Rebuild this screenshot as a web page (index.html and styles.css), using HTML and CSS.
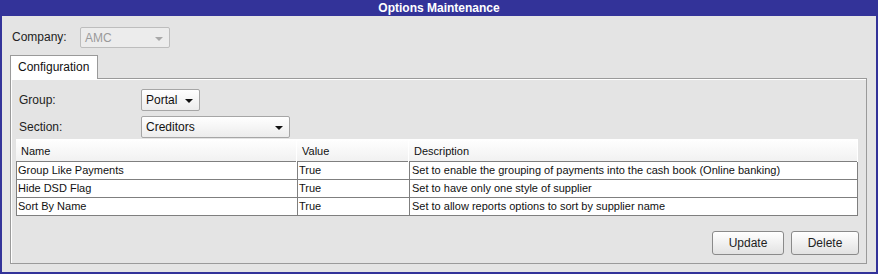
FILE: index.html
```html
<!DOCTYPE html>
<html lang="en">
<head>
    <meta charset="UTF-8">
    <title>Options Maintenance</title>
    <link rel="stylesheet" href="styles.css">
</head>
<body>
    <div class="window">
        <div class="title-bar">Options Maintenance</div>
        <div class="content">
            <div class="company-row">
                <span class="label company-label">Company:</span>
                <div class="combo disabled company-combo">AMC<span class="arrow"></span></div>
            </div>
            <div class="tabs">
                <div class="tab">Configuration</div>
            </div>
            <div class="panel">
                <div class="form-row">
                    <span class="label">Group:</span>
                    <div class="combo group-combo">Portal<span class="arrow"></span></div>
                </div>
                <div class="form-row">
                    <span class="label">Section:</span>
                    <div class="combo section-combo">Creditors<span class="arrow"></span></div>
                </div>
                <div class="grid">
                    <div class="grid-head">
                        <div class="hcell">Name</div>
                        <div class="hcell">Value</div>
                        <div class="hcell">Description</div>
                    </div>
                    <div class="grid-body">
                        <div class="row">
                            <div class="cell">Group Like Payments</div>
                            <div class="cell">True</div>
                            <div class="cell">Set to enable the grouping of payments into the cash book (Online banking)</div>
                        </div>
                        <div class="row">
                            <div class="cell">Hide DSD Flag</div>
                            <div class="cell">True</div>
                            <div class="cell">Set to have only one style of supplier</div>
                        </div>
                        <div class="row">
                            <div class="cell">Sort By Name</div>
                            <div class="cell">True</div>
                            <div class="cell">Set to allow reports options to sort by supplier name</div>
                        </div>
                    </div>
                </div>
                <div class="buttons">
                    <button class="btn update-btn">Update</button>
                    <button class="btn delete-btn">Delete</button>
                </div>
            </div>
        </div>
    </div>
</body>
</html>
```

FILE: styles.css
```css
body {
    margin: 0;
    font-family: "Liberation Sans", Arial, sans-serif;
    background-color: #e4e4e4;
}
.window {
    width: 878px;
    height: 274px;
    box-sizing: border-box;
    background-color: #333399;
    padding: 0 2px 2px 2px;
    display: flex;
    flex-direction: column;
}
.title-bar {
    height: 16px;
    line-height: 16px;
    color: #fff;
    font-weight: bold;
    font-size: 12px;
    text-align: center;
}
.content {
    flex: 1;
    background-color: #e4e4e4;
    padding: 10px 9px 0 8px;
    display: flex;
    flex-direction: column;
}
.company-row {
    display: flex;
    align-items: center;
    height: 22px;
}
.label {
    font-size: 12px;
    color: #222;
}
.company-label {
    margin-left: 2px;
    width: 68px;
}
.combo {
    position: relative;
    box-sizing: border-box;
    height: 22px;
    line-height: 20px;
    font-size: 12px;
    padding-left: 4px;
    color: #111;
    border: 1px solid #a6a6a6;
    border-radius: 2px;
    background: linear-gradient(#ffffff, #ececec);
}
.combo .arrow {
    position: absolute;
    right: 6px;
    top: 9px;
    border-left: 4px solid transparent;
    border-right: 4px solid transparent;
    border-top: 4px solid #111;
}
.combo.disabled {
    color: #9a9a9a;
    background: #ececec;
    border-color: #bdbdbd;
}
.combo.disabled .arrow {
    border-top-color: #a8a8a8;
}
.company-combo {
    width: 90px;
    height: 21px;
    margin-top: 1px;
}
.group-combo {
    width: 59px;
}
.section-combo {
    width: 149px;
}
.tabs {
    display: flex;
    margin-top: 7px;
    position: relative;
    z-index: 1;
}
.tab {
    height: 23px;
    line-height: 22px;
    box-sizing: border-box;
    width: 88px;
    padding-left: 7px;
    font-size: 12px;
    color: #111;
    background-color: #fff;
    border: 1px solid #9a9a9a;
    border-bottom: none;
    margin-bottom: -1px;
    height: 24px;
}
.panel {
    width: 857px;
    height: 186px;
    box-sizing: border-box;
    border: 1px solid #9a9a9a;
    box-shadow: inset 1px 1px 0 #fff;
    padding-top: 10px;
    display: flex;
    flex-direction: column;
}
.form-row {
    display: flex;
    align-items: center;
    height: 22px;
    padding-left: 8px;
    margin-bottom: 5px;
}
.form-row .label {
    width: 122px;
}
.form-row + .form-row {
    margin-bottom: 1px;
}
.grid {
    margin-left: 5px;
    width: 842px;
    font-size: 11px;
    color: #111;
}
.grid-head {
    display: grid;
    grid-template-columns: 281px 112px 449px;
    height: 22px;
    background: linear-gradient(#ffffff, #f1f1f1);
}
.hcell {
    line-height: 24px;
    padding-left: 5px;
    border-right: 1px solid #fff;
}
.grid-body {
    border: 1px solid #7f7f7f;
    border-right: none;
    width: 842px;
    box-sizing: border-box;
    background-color: #fff;
}
.row {
    display: grid;
    grid-template-columns: 281px 112px 448px;
    height: 17px;
    border-bottom: 1px solid #7f7f7f;
}
.row:last-child {
    border-bottom: none;
}
.cell {
    line-height: 16px;
    padding-left: 1px;
    border-right: 1px solid #7f7f7f;
    white-space: nowrap;
}
.cell:nth-child(2) {
    padding-left: 1px;
}
.cell:nth-child(3) {
    padding-left: 2px;
}
.buttons {
    margin-top: auto;
    margin-bottom: 8px;
    display: flex;
    justify-content: flex-end;
    gap: 7px;
    padding-right: 7px;
}
.btn {
    height: 24px;
    box-sizing: border-box;
    font-family: "Liberation Sans", Arial, sans-serif;
    font-size: 12px;
    color: #222;
    border: 1px solid #8a8a8a;
    border-radius: 3px;
    background: linear-gradient(#ffffff, #e2e2e2);
    padding: 0;
}
.update-btn {
    width: 72px;
}
.delete-btn {
    width: 68px;
}
```
